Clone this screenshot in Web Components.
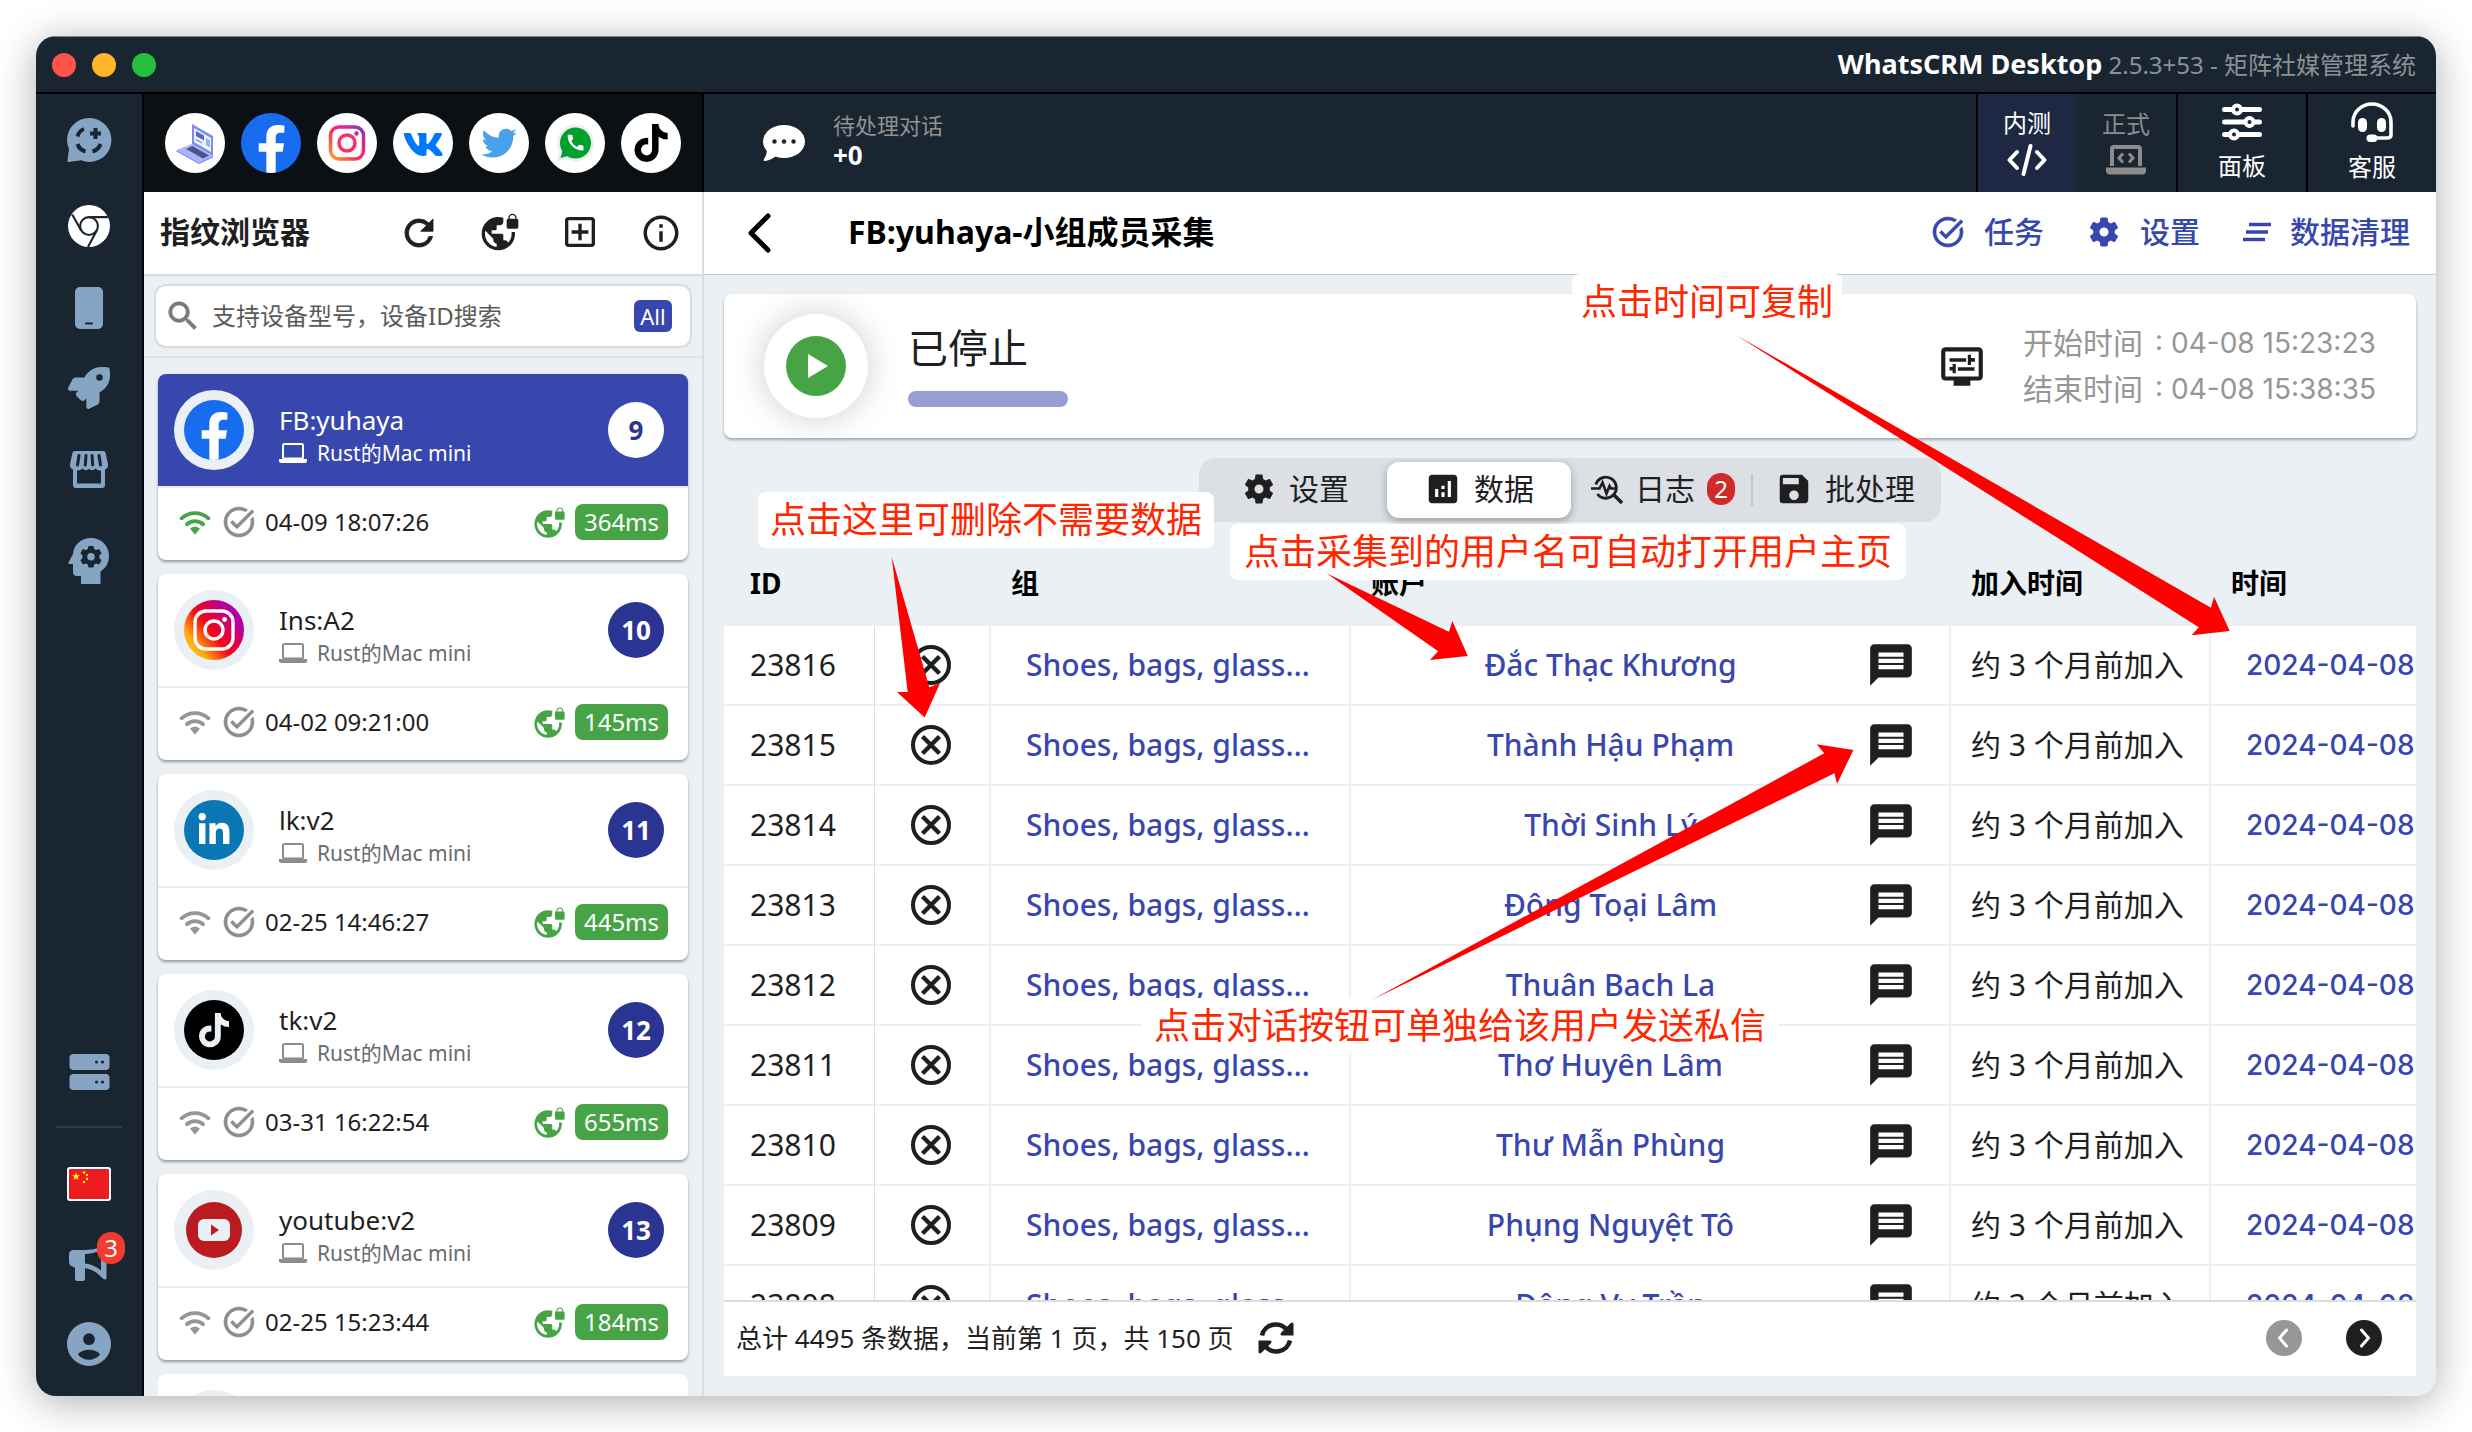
<!DOCTYPE html>
<html lang="zh-CN">
<head>
<meta charset="utf-8">
<title>WhatsCRM Desktop</title>
<style>
html,body{height:100%}
body{margin:0;background:#fff;color:#1f1f1f;font-family:"Noto Sans","Noto Sans CJK SC",sans-serif;
--ink:#1a2532;--muted:#86a5c3;--brand:#3747ad;--navy:#2a3593;--green:#46a446;--pane:#ebf0f5;--line:#dcdcdc;overflow:hidden}
</style>
</head>
<body>
<app-window></app-window>
<note-layer></note-layer>

<script>
const ICONS = {
  refresh:['0 0 24 24','<path d="M17.65 6.35A7.958 7.958 0 0 0 12 4c-4.42 0-7.99 3.58-7.99 8s3.57 8 7.99 8c3.73 0 6.84-2.55 7.73-6h-2.08A5.99 5.99 0 0 1 12 18c-3.31 0-6-2.69-6-6s2.69-6 6-6c1.66 0 3.14.69 4.22 1.78L13 11h7V4l-2.35 2.35z" stroke="currentColor" stroke-width=".5"/>'],
  vpn:['0 0 24 24','<path d="M22 4v-.5C22 2.12 20.88 1 19.5 1S17 2.12 17 3.5V4c-.55 0-1 .45-1 1v4c0 .55.45 1 1 1h5c.55 0 1-.45 1-1V5c0-.55-.45-1-1-1zm-.8 0h-3.4v-.5c0-.94.76-1.7 1.7-1.7s1.7.76 1.7 1.7V4zm-2.28 8c.04.33.08.66.08 1 0 2.08-.8 3.97-2.1 5.39-.26-.81-1-1.39-1.9-1.39h-1v-3c0-.55-.45-1-1-1H7v-2h2c.55 0 1-.45 1-1V8h2c1.1 0 2-.9 2-2V3.46c-.95-.3-1.95-.46-3-.46C5.48 3 1 7.48 1 13s4.48 10 10 10 10-4.48 10-10c0-.34-.02-.67-.05-1h-2.03zM10 20.93c-3.95-.49-7-3.85-7-7.93 0-.62.08-1.21.21-1.79L8 16v1c0 1.1.9 2 2 2v1.93z"/>'],
  add:['0 0 24 24','<path d="M19 3H5c-1.11 0-2 .9-2 2v14c0 1.1.89 2 2 2h14c1.1 0 2-.9 2-2V5c0-1.1-.9-2-2-2zm0 16H5V5h14v14zm-8-2h2v-4h4v-2h-4V7h-2v4H7v2h4z"/>'],
  info:['0 0 24 24','<path d="M11 7h2v2h-2zm0 4h2v6h-2zm1-9C6.48 2 2 6.48 2 12s4.48 10 10 10 10-4.48 10-10S17.52 2 12 2zm0 18c-4.41 0-8-3.59-8-8s3.59-8 8-8 8 3.59 8 8-3.59 8-8 8z"/>'],
  search:['0 0 24 24','<path d="M15.5 14h-.79l-.28-.27A6.471 6.471 0 0 0 16 9.5 6.5 6.5 0 1 0 9.5 16c1.61 0 3.09-.59 4.23-1.57l.27.28v.79l5 4.99L20.49 19l-4.99-5zm-6 0C7.01 14 5 11.99 5 9.5S7.01 5 9.5 5 14 7.01 14 9.5 11.99 14 9.5 14z" stroke="currentColor" stroke-width=".5"/>'],
  message:['0 0 24 24','<path d="M20 2H4c-1.1 0-1.99.9-1.99 2L2 22l4-4h14c1.1 0 2-.9 2-2V4c0-1.1-.9-2-2-2zm-2 12H6v-2h12v2zm0-3H6V9h12v2zm0-3H6V6h12v2z"/>'],
  gear:['0 0 24 24','<path fill-rule="evenodd" d="M19.14 12.94c.04-.3.06-.61.06-.94 0-.32-.02-.64-.07-.94l2.03-1.58c.18-.14.23-.41.12-.61l-1.92-3.32c-.12-.22-.37-.29-.59-.22l-2.39.96c-.5-.38-1.03-.7-1.62-.94l-.36-2.54c-.04-.24-.24-.41-.48-.41h-3.84c-.24 0-.43.17-.47.41l-.36 2.54c-.59.24-1.13.57-1.62.94l-2.39-.96c-.22-.08-.47 0-.59.22L2.74 8.87c-.12.21-.08.47.12.61l2.03 1.58c-.05.3-.09.63-.09.94s.02.64.07.94l-2.03 1.58c-.18.14-.23.41-.12.61l1.92 3.32c.12.22.37.29.59.22l2.39-.96c.5.38 1.03.7 1.62.94l.36 2.54c.05.24.24.41.48.41h3.84c.24 0 .44-.17.47-.41l.36-2.54c.59-.24 1.13-.56 1.62-.94l2.39.96c.22.08.47 0 .59-.22l1.92-3.32c.12-.22.07-.47-.12-.61l-2.01-1.58zM12 15a3 3 0 1 1 0-6 3 3 0 0 1 0 6z"/>'],
  save:['0 0 24 24','<path d="M17 3H5a2 2 0 0 0-2 2v14a2 2 0 0 0 2 2h14c1.1 0 2-.9 2-2V7l-4-4zm-5 16c-1.66 0-3-1.34-3-3s1.34-3 3-3 3 1.34 3 3-1.34 3-3 3zm3-10H5V5h10v4z"/>'],
  chart:['0 0 24 24','<path d="M19 3H5c-1.1 0-2 .9-2 2v14c0 1.1.9 2 2 2h14c1.1 0 2-.9 2-2V5c0-1.1-.9-2-2-2zM9 17H7v-5h2v5zm4 0h-2v-3h2v3zm0-5h-2v-2h2v2zm4 5h-2V7h2v10z"/>'],
  task:['0 0 24 24','<path d="M22 5.18 10.59 16.6l-4.24-4.24 1.41-1.41 2.83 2.83 10-10L22 5.18zm-2.21 5.04c.13.57.21 1.17.21 1.78 0 4.42-3.58 8-8 8s-8-3.58-8-8 3.58-8 8-8c1.58 0 3.04.46 4.28 1.25l1.44-1.44A9.9 9.9 0 0 0 12 2C6.48 2 2 6.48 2 12s4.48 10 10 10 10-4.48 10-10c0-1.19-.22-2.33-.6-3.39l-1.61 1.61z" stroke="currentColor" stroke-width=".4"/>'],
  wifi:['0 0 24 24','<g fill="none" stroke="currentColor" stroke-width="2.7" stroke-linecap="round"><path d="M2.5 9.4a14 14 0 0 1 19 0"/><path d="M6.3 13.6a8.4 8.4 0 0 1 11.4 0"/></g><path d="M9.2 16.8a4.4 4.4 0 0 1 5.6 0L12 20.2z" stroke="currentColor" stroke-linejoin="round"/>'],
  laptop:['0 0 28 22','<rect x="4" y="2" width="20" height="14.5" rx="1.5" fill="none" stroke="currentColor" stroke-width="2"/><path d="M0 17h28v2q0 2-2 2H2q-2 0-2-2z"/>'],
  account:['0 0 24 24','<path fill-rule="evenodd" d="M12 0a12 12 0 1 0 0 24 12 12 0 0 0 0-24zm0 6.2a3.2 3.2 0 1 1 0 6.4 3.2 3.2 0 0 1 0-6.4zM5.9 17.6C8.6 14.3 15.4 14.3 18.1 17.6 15.4 21.6 8.6 21.6 5.9 17.6z"/>'],
  head:['0 0 42 46','<path fill-rule="evenodd" d="M23 0C33.500 0 41 8 41 18q0 10-8.500 15.500V46H13v-8H9q-4 0-4-4v-8H1.500Q-.3 26 .6 24.300L5 16C5.500 7 13 0 23 0z"/><g transform="translate(11.200 7) scale(.98)"><path fill="#1a2532" fill-rule="evenodd" d="M9.500 1h5l.8 3 2 1.100 3-.9 2.500 4.300-2.200 2.200v2.600l2.200 2.200-2.500 4.300-3-.9-2 1.100-.8 3h-5l-.8-3-2-1.100-3 .9L1.200 15.500l2.200-2.200v-2.600L1.200 8.500l2.500-4.300 3 .9 2-1.100zM12 8.200a3.800 3.800 0 1 0 0 7.600 3.800 3.800 0 0 0 0-7.600z"/></g>'],
  display:['0 0 24 24','<path d="M20 3H4c-1.1 0-2 .9-2 2v12c0 1.1.9 2 2 2h4v2.500h8V19h4c1.100 0 2-.9 2-2V5c0-1.100-.9-2-2-2zm0 14H4V5h16v12z"/><path d="M6 8.250h8v1.700H6zM16.300 10h1.900V8.200h-1.900V6.600h-1.500v4.900h1.500zM10 12.600h8v1.700h-8zM7.500 15.500H9v-4.500H7.500v1.500H6v1.700h1.500z"/>'],
  chatplus:['0 0 44 44','<path d="M22 0a22 22 0 1 1-8 42.300L1.500 44Q.2 44 .5 42.500L2 31A22 22 0 0 1 22 0z"/><g stroke="#1a2532" fill="none" stroke-linecap="butt" stroke-width="4"><path d="M10.500 18.500Q12 13 17 11M10.500 26q2 6 8 7.500M25.500 33.500q6-1.500 8-7.500"/><path d="M28.500 10v11M23 15.500h11"/></g>'],
  chrome:['0 0 40 40','<circle cx="20" cy="20" r="20"/><g fill="none" stroke="#1a2532" stroke-width="2"><circle cx="20" cy="20" r="8.500"/><path d="M20 11.500h18M12.600 24.200 4 9M27.400 24.200 19 40"/></g>'],
  phone:['0 0 28 42','<rect width="28" height="42" rx="5"/><path d="M11 36.500h6" stroke="#1a2532" stroke-width="2" stroke-linecap="round"/>'],
  rocket:['0 0 512 512','<path d="M505.120 19.094c-1.189-5.531-6.658-11-12.207-12.188C460.716 0 435.507 0 410.407 0 307.175 0 245.269 55.203 199.052 128H94.838c-16.348.016-35.557 11.875-42.887 26.484L2.516 253.297A28.400 28.400 0 0 0 0 264a24 24 0 0 0 24.006 24h103.810l-22.475 22.469c-11.365 11.361-12.996 32.258 0 45.250L156.246 406.625c11.156 11.188 32.156 13.156 45.277 0l22.475-22.469V488a24 24 0 0 0 24.006 24 28.559 28.559 0 0 0 10.707-2.516l98.728-49.391c14.629-7.297 26.508-26.500 26.508-42.859V312.797c72.598-46.313 128.035-108.406 128.035-211.094.094-25.203.094-50.412-6.862-82.609zM384.040 168A40 40 0 1 1 424.050 128 40.023 40.023 0 0 1 384.040 168z"/>'],
  store:['0 0 40 38','<path d="M3.500 1.500Q4 0 6 0h28q2 0 2.500 1.500L39 13q.6 4-3 5.500V34q0 3-3 3H7q-3 0-3-3V18.500Q.4 17 1 13zM8 19.500V32.500h24v-13q-3 .5-5.500-2-3 3-6.500.5-3.500 2.500-6.500-.5-2.500 2.500-5.500 2z" fill-rule="evenodd"/><path d="M10 4.500 8.500 14M17 4.500 16.300 14M23 4.500l.7 9.500M30 4.500 31.500 14" stroke="#1a2532" stroke-width="3" stroke-linecap="round"/>'],
  server:['0 0 40 36','<rect width="40" height="16" rx="4"/><rect y="20" width="40" height="16" rx="4"/><g fill="#1a2532"><circle cx="27" cy="8" r="1.600"/><circle cx="33" cy="8" r="1.600"/><circle cx="27" cy="28" r="1.600"/><circle cx="33" cy="28" r="1.600"/></g>'],
  flag:['0 0 44 34','<rect width="44" height="34" rx="3" fill="#fff"/><rect x="2" y="2" width="40" height="30" rx="1" fill="#ee1c21"/><g fill="#ff0"><path d="M9 5.500l1 2.800h3l-2.400 1.800.9 2.900L9 11.300 6.500 13l.9-2.900L5 8.300h3z"/><circle cx="17" cy="5.500" r="1.200"/><circle cx="20" cy="8" r="1.200"/><circle cx="20" cy="12" r="1.200"/><circle cx="17" cy="15" r="1.200"/></g>'],
  horn:['0 0 40 36','<path fill-rule="evenodd" d="M36 0q1.500 0 1.500 2v30q0 1.500-1.500 1.500-1 0-2-1-8-9-18-10.500v11q0 2-2 2H8q-2 0-2-2V21.500Q0 20 0 16V9q0-5 5-5h10q10 0 18-3.500zM16 8v9.500q9 1 16 7V4q-8 4-16 4z"/>'],
  dots:['0 0 42 36','<ellipse cx="21" cy="16.500" rx="21" ry="16.500"/><path d="M3.500 22q1.500 6-2.500 12-1 2 .8 2Q7.500 35.500 13 31z"/><g fill="#1a2532"><circle cx="11.500" cy="16.500" r="2.200"/><circle cx="21" cy="16.500" r="2.200"/><circle cx="30.500" cy="16.500" r="2.200"/></g>'],
  code:['0 0 40 32','<g fill="none" stroke="currentColor" stroke-width="4" stroke-linecap="round" stroke-linejoin="round"><path d="M10 8 2.500 16 10 24M30 8l7.500 8-7.500 8M23.500 2l-7 28"/></g>'],
  codelap:['0 0 40 30','<path fill="none" stroke="currentColor" stroke-width="4" d="M6 21V4q0-2 2-2h24q2 0 2 2v17"/><path d="M0 22.500h40v3q0 4-4 4H4q-4 0-4-4z"/><path d="M17 8.500 13 13l4 4.500M23 8.500l4 4.500-4 4.500" fill="none" stroke="currentColor" stroke-width="3"/>'],
  sliders:['0 0 40 38','<g stroke="currentColor" stroke-width="5" stroke-linecap="round"><path d="M2.500 6.500h35M2.500 19h35M2.500 31.500h35"/></g><g fill="#1a2532" stroke="currentColor" stroke-width="4"><circle cx="15" cy="6.500" r="4"/><circle cx="27.500" cy="19" r="4"/><circle cx="12" cy="31.500" r="4"/></g>'],
  headset:['0 0 42 40','<path fill="none" stroke="currentColor" stroke-width="3.600" stroke-linecap="round" d="M2 24v-4a19 18 0 0 1 38 0v13q0 3-4 3H22"/><rect x="7" y="16" width="9" height="14" rx="4.500"/><rect x="26" y="16" width="9" height="14" rx="4.500"/><rect x="15.500" y="32.500" width="11" height="7.500" rx="3.700"/>'],
  back:['0 0 24 40','<path d="M21 3 4 20l17 17" fill="none" stroke="currentColor" stroke-width="5" stroke-linecap="round" stroke-linejoin="round"/>'],
  lines:['0 0 28 20','<path d="M6 2.500h22M3 10h22M0 17.500h22" stroke="currentColor" stroke-width="3.600"/>'],
  play:['0 0 20 24','<path d="M0 0v24l20-12z"/>'],
  log:['0 0 32 30','<g fill="none" stroke="currentColor" stroke-width="2.900"><path d="M4.800 10.500a10.500 10.500 0 1 1 1.600 9.500"/><path d="M22.500 20.500 31 29" stroke-width="3.600"/><path d="M0 14.500h8.500l3-6 4 11 3-7.500 1.500 2.500h4" stroke-width="2.600"/></g>'],
  remove:['0 0 40 40','<g fill="none" stroke="currentColor"><circle cx="20" cy="20" r="18" stroke-width="4"/><path d="m11.500 11.500 17 17m0-17-17 17" stroke-width="4.400"/></g>'],
  sync:['0 0 36 34','<g fill="none" stroke="currentColor" stroke-width="4.600"><path d="M4 14.500A14 14 0 0 1 29.500 10"/><path d="M32 19.500A14 14 0 0 1 6.500 24"/></g><path d="M34 1.500q1.500 0 1.500 1.500v11.500H24q-1.500 0-1.500-1.500 0-1 .8-1.600L32.500 2.200zM2 32.500Q.5 32.500.5 31V19.500H12q1.500 0 1.500 1.500 0 1-.8 1.600L3.500 31.800z"/>'],
  prev:['0 0 36 36','<circle cx="18" cy="18" r="18"/><path d="m20.500 10-7 8 7 8" fill="none" stroke="#fff" stroke-width="3" stroke-linecap="round"/>'],
  next:['0 0 36 36','<circle cx="18" cy="18" r="18"/><path d="m15.500 10 7 8-7 8" fill="none" stroke="#fff" stroke-width="3" stroke-linecap="round"/>']
};
const TIKTOK = 'M448 209.910a210.060 210.060 0 0 1-122.770-39.250V349.380A162.550 162.550 0 1 1 185 188.310V278.200a74.620 74.620 0 1 0 52.230 71.180V0l88 0a121.180 121.180 0 0 0 1.860 22.170A122.180 122.180 0 0 0 381 102.390a121.430 121.430 0 0 0 67 20.140z';
const FB = '<circle cx="30" cy="30" r="30" fill="#186cf0"/><path transform="scale(2.500)" fill="#fff" d="M16.671 15.543l.532-3.470h-3.328v-2.250c0-.949.465-1.874 1.956-1.874h1.514V4.996s-1.374-.235-2.686-.235c-2.741 0-4.533 1.662-4.533 4.669v2.643H7.078v3.470h3.047v8.300q1.875.3 3.750 0v-8.300z"/>';
const BRANDS = {
  laptop:'<circle cx="30" cy="30" r="30" fill="#fff"/><path d="M27 11 48 23v20L27 31z" fill="#7d8cf0"/><path d="M29 15l17 10v14L29 29z" fill="#eef2ff"/><path d="M31 18l8 4.500v5L31 23zM31 26l6 3.500v1L31 27z" fill="#5365d8"/><path d="M41 25l4 2.300v7L41 32z" fill="#8fb5f5"/><path d="M27 31 48 43 34 49.500 11.500 37z" fill="#a9b4ff"/><path d="M27.500 33 44 42.500l-6 3L21 36z" fill="#4c5485"/><path d="M11.500 37 34 49.500 48 43v1.500L34 51 11.500 38.500z" fill="#7d8cf0"/>',
  facebook:FB,
  instagram:'<defs><linearGradient id="g" x1="0" y1="1" x2="1" y2="0"><stop offset="0" stop-color="#ffa52c"/><stop offset=".35" stop-color="#ff3a55"/><stop offset=".65" stop-color="#f5208c"/><stop offset="1" stop-color="#7d3cb8"/></linearGradient></defs><circle cx="30" cy="30" r="30" fill="#fff"/><rect x="13.500" y="14" width="33" height="32" rx="8.500" fill="none" stroke="url(#g)" stroke-width="3.500"/><circle cx="30" cy="30" r="8" fill="none" stroke="#ff2f66" stroke-width="3.500"/><circle cx="39.500" cy="20.500" r="2.200" fill="#c02aa8"/>',
  vk:'<circle cx="30" cy="30" r="30" fill="#fff"/><path transform="translate(9.500 13) scale(.072)" fill="#07f" d="M545 117.700c3.700-12.500 0-21.700-17.800-21.700h-58.900c-15 0-21.900 7.900-25.600 16.700 0 0-30 73.100-72.400 120.500-13.700 13.700-20 18.100-27.500 18.100-3.700 0-9.400-4.400-9.400-16.900V117.700c0-15-4.200-21.700-16.600-21.700h-92.600c-9.400 0-15 7-15 13.500 0 14.200 21.200 17.500 23.400 57.500v86.800c0 19-3.400 22.500-10.900 22.500-20 0-68.600-73.400-97.400-157.400-5.800-16.300-11.500-22.900-26.600-22.900H38.800c-16.800 0-20.200 7.900-20.200 16.700 0 15.600 20 93.100 93.100 195.500C160.400 378.100 229 416 291.400 416c37.500 0 42.100-8.400 42.100-22.900 0-66.800-3.400-73.100 15.400-73.100 8.700 0 23.700 4.400 58.700 38.100 40 40 46.600 57.900 69 57.900h58.900c16.800 0 25.300-8.400 20.400-25-11.200-34.900-86.900-106.700-90.300-111.500-8.700-11.200-6.200-16.200 0-26.200.1-.1 72-101.300 79.400-135.600z"/>',
  twitter:'<circle cx="30" cy="30" r="30" fill="#fff"/><path transform="translate(12.500 12.500) scale(.0690)" fill="#4ba0eb" d="M459.370 151.716c.325 4.548.325 9.097.325 13.645 0 138.720-105.583 298.558-298.558 298.558-59.452 0-114.680-17.219-161.137-47.106 8.447.974 16.568 1.299 25.340 1.299 49.055 0 94.213-16.568 130.274-44.832-46.132-.975-84.792-31.188-98.112-72.772 6.498.974 12.995 1.624 19.818 1.624 9.421 0 18.843-1.300 27.614-3.573-48.081-9.747-84.143-51.980-84.143-102.985v-1.299c13.969 7.797 30.214 12.670 47.431 13.319-28.264-18.843-46.781-51.005-46.781-87.391 0-19.492 5.197-37.360 14.294-52.954 51.655 63.675 129.300 105.258 216.365 109.807-1.624-7.797-2.599-15.918-2.599-24.040 0-57.828 46.782-104.934 104.934-104.934 30.213 0 57.502 12.670 76.670 33.137 23.715-4.548 46.456-13.320 66.599-25.340-7.798 24.366-24.366 44.833-46.132 57.827 21.117-2.273 41.584-8.122 60.426-16.243-14.292 20.791-32.161 39.308-52.628 54.253z"/>',
  whatsapp:'<circle cx="30" cy="30" r="30" fill="#fff"/><circle cx="30.500" cy="30" r="18.500" fill="#eee"/><path d="M11.500 49l3.500-12 8 9z" fill="#eee"/><circle cx="30.500" cy="30" r="15.500" fill="#00a02f"/><path d="M15.500 45l2.500-9 6.500 6.500z" fill="#00a02f"/><path transform="translate(20 19) scale(.88)" fill="#fff" d="M20.010 15.380c-1.230 0-2.420-.2-3.530-.56-.35-.12-.74-.03-1.010.24l-1.570 1.970c-2.830-1.350-5.480-3.900-6.890-6.830l1.950-1.660c.27-.28.35-.67.24-1.020-.37-1.110-.56-2.300-.56-3.530 0-.54-.45-.99-.99-.99H4.190C3.650 3 3 3.240 3 3.990 3 13.280 10.730 21 20.010 21c.71 0 .99-.63.99-1.180v-3.450c0-.54-.45-.99-.99-.99z"/>',
  tiktok:`<circle cx="30" cy="30" r="30" fill="#fff"/><path transform="translate(13.500 11) scale(.0740)" d="${TIKTOK}"/>`,
  insround:'<defs><linearGradient id="h" x1="0" y1=".9" x2="1" y2=".1"><stop offset="0" stop-color="#ffd21e"/><stop offset=".2" stop-color="#ffa812"/><stop offset=".45" stop-color="#f50a14"/><stop offset=".6" stop-color="#e00040"/><stop offset=".8" stop-color="#b400a0"/><stop offset="1" stop-color="#a800c0"/></linearGradient></defs><circle cx="30" cy="30" r="30" fill="url(#h)"/><rect x="11" y="11" width="38" height="38" rx="11" fill="none" stroke="#fff" stroke-width="3.400"/><circle cx="30" cy="30" r="9" fill="none" stroke="#fff" stroke-width="3.400"/><circle cx="40.500" cy="19.500" r="2.400" fill="#fff"/>',
  linkedin:'<circle cx="30" cy="30" r="30" fill="#0a76b4"/><path transform="translate(14.500 13) scale(.0690)" fill="#fff" d="M100.280 448H7.400V148.900h92.880zM53.790 108.100C24.090 108.100 0 83.500 0 53.800a53.790 53.790 0 0 1 107.580 0c0 29.700-24.100 54.300-53.790 54.300zM447.900 448h-92.680V302.400c0-34.700-.7-79.200-48.290-79.200-48.290 0-55.690 37.700-55.690 76.700V448h-92.780V148.900h89.080v40.800h1.300c12.400-23.500 42.690-48.300 87.880-48.300 94 0 111.280 61.900 111.280 142.300V448z"/>',
  tkround:`<circle cx="30" cy="30" r="30" fill="#000"/><path transform="translate(15 13) scale(.0670)" fill="#ebf0f5" d="${TIKTOK}"/>`,
  youtube:'<circle cx="30" cy="30" r="28" fill="#b91b20"/><rect x="14" y="19" width="32" height="22" rx="6" fill="#ebf0f5"/><path d="M27 24.500v11l8-5.500z" fill="#b91b20"/>'
};

class UiIcon extends HTMLElement {
  connectedCallback(){
    const [box,art] = ICONS[this.getAttribute('name')];
    this.attachShadow({mode:'open'}).innerHTML =
      `<style>:host{display:inline-flex;flex:none;width:var(--w,36px);height:var(--h,var(--w,36px))}svg{width:100%;height:100%;display:block;overflow:visible}</style><svg viewBox="${box}" fill="currentColor" aria-hidden="true">${art}</svg>`;
  }
}
customElements.define('ui-icon',UiIcon);

class BrandLogo extends HTMLElement {
  connectedCallback(){
    this.attachShadow({mode:'open'}).innerHTML =
      `<style>:host{display:block;flex:none;width:60px;height:60px}svg{display:block;width:100%;height:100%}</style><svg viewBox="0 0 60 60" aria-hidden="true">${BRANDS[this.getAttribute('name')]}</svg>`;
  }
}
customElements.define('brand-logo',BrandLogo);

const ic = (name,w,h=w) => `<ui-icon name="${name}" style="--w:${w}px;--h:${h}px"></ui-icon>`;
const RESET = `*{box-sizing:border-box}button{all:unset;box-sizing:border-box;cursor:pointer}a{color:inherit;text-decoration:none}`;

customElements.define('title-bar',class extends HTMLElement{
  connectedCallback(){
    this.attachShadow({mode:'open'}).innerHTML=`<style>${RESET}
    :host{display:flex;align-items:center;justify-content:space-between;height:58px;padding:0 20px 0 16px;background:var(--ink);border-top:1px solid #7d8792;border-bottom:2px solid #000;box-sizing:border-box;flex:none}
    .lights{display:flex;gap:16px}.lights button{width:24px;height:24px;border-radius:50%}
    h1{margin:0;font-size:24px;line-height:36px;font-weight:400;color:#8c9196}
    b{font-size:27px;font-weight:700;color:#fff}</style>
    <div class="lights"><button aria-label="关闭" style="background:#ff5249"></button><button aria-label="最小化" style="background:#ffb429"></button><button aria-label="最大化" style="background:#24c138"></button></div>
    <h1><b>WhatsCRM Desktop</b> 2.5.3+53 - 矩阵社媒管理系统</h1>`;
  }
});

customElements.define('nav-rail',class extends HTMLElement{
  connectedCallback(){
    this.attachShadow({mode:'open'}).innerHTML=`<style>${RESET}
    :host{display:flex;flex-direction:column;justify-content:space-between;width:108px;box-sizing:border-box;background:var(--ink);border-right:2px solid #000;color:var(--muted);padding:2px 0 12px;flex:none}
    nav,div.low{display:flex;flex-direction:column;align-items:center}
    button{height:80px;width:100%;display:flex;align-items:center;justify-content:center}
    .on{color:#fff}.first{height:88px}.tall{height:84px}.last{height:98px}
    hr{width:66px;height:2px;border:0;margin:14px 0 16px;background:#2b3d59}
    .badge{position:relative}.badge span{position:absolute;top:8px;right:17px;min-width:28px;height:32px;border-radius:16px;background:#f23b30;color:#fff;font-size:24px;line-height:32px;text-align:center}
    </style>
    <nav><button class="first" aria-label="对话">${ic('chatplus',44)}</button><button class="on tall" aria-label="浏览器">${ic('chrome',42)}</button><button aria-label="手机">${ic('phone',28,42)}</button><button aria-label="任务">${ic('rocket',42)}</button><button class="tall" aria-label="商店">${ic('store',40,38)}</button><button class="last" aria-label="智能">${ic('head',42,46)}</button></nav>
    <div class="low"><button aria-label="服务器">${ic('server',41,36)}</button><hr><button aria-label="语言">${ic('flag',44,34)}</button><button class="badge" aria-label="公告">${ic('horn',40,36)}<span>3</span></button><button aria-label="账户">${ic('account',44)}</button></div>`;
  }
});

customElements.define('social-bar',class extends HTMLElement{
  connectedCallback(){
    this.attachShadow({mode:'open'}).innerHTML=`<style>${RESET}:host{display:flex;align-items:center;gap:16px;height:98px;padding:0 21px;box-sizing:border-box;background:#0b1015;flex:none}</style>`+
    ['laptop','facebook','instagram','vk','twitter','whatsapp','tiktok'].map(n=>`<button aria-label="${n}"><brand-logo name="${n}"></brand-logo></button>`).join('');
  }
});

customElements.define('device-card',class extends HTMLElement{
  connectedCallback(){
    const a=n=>this.getAttribute(n);
    this.attachShadow({mode:'open'}).innerHTML=`<style>${RESET}
    :host{display:block;height:186px;background:#fff;border-radius:8px;overflow:hidden;box-shadow:0 2px 3px rgba(0,0,0,.35);flex:none}
    .top{display:flex;align-items:center;height:114px;padding:0 24px 0 16px;border-bottom:2px solid #eee}
    .avatar{width:80px;height:80px;border-radius:50%;background:var(--pane);display:grid;place-items:center}
    .who{flex:1;padding:12px 0 0 25px;display:flex;flex-direction:column}
    .name{font-size:26px;line-height:34px}
    .host{display:flex;align-items:center;gap:10px;font-size:21px;line-height:32px;color:#6b6b6b}
    .host ui-icon{color:#8c8c8c}
    .num{width:56px;height:56px;border-radius:50%;background:var(--navy);color:#fff;font-size:26px;font-weight:700;line-height:56px;text-align:center}
    .bot{display:flex;align-items:center;height:68px;padding:0 20px 0 20px;font-size:24px;line-height:36px}
    .bot .t{flex:1;padding-left:8px}
    .wifi{color:#969696;display:flex}.chk{color:#8c8c8c;display:flex;margin-left:9px}.vpn{color:var(--green);display:flex;margin-right:9px}
    .ms{background:var(--green);color:#fff;border-radius:8px;width:93px;text-align:center}
    :host([selected]) .top{background:var(--brand)}
    :host([selected]) .top .who,:host([selected]) .host,:host([selected]) .host ui-icon{color:#fff}
    :host([selected]) .num{background:#fff;color:var(--navy)}
    :host([selected]) .wifi{color:var(--green)}</style>
    <div class="top"><div class="avatar"><brand-logo name="${a('brand')}"></brand-logo></div><div class="who"><span class="name">${a('name')}</span><span class="host">${ic('laptop',28,22)}Rust的Mac mini</span></div><span class="num">${a('num')}</span></div>
    <div class="bot"><span class="wifi">${ic('wifi',34)}</span><span class="chk">${ic('task',36)}</span><time class="t">${a('time')}</time><span class="vpn">${ic('vpn',33)}</span><span class="ms">${a('ms')}</span></div>`;
  }
});

customElements.define('device-panel',class extends HTMLElement{
  connectedCallback(){
    const D=[['facebook','FB:yuhaya',9,'04-09 18:07:26','364ms'],['insround','Ins:A2',10,'04-02 09:21:00','145ms'],['linkedin','lk:v2',11,'02-25 14:46:27','445ms'],['tkround','tk:v2',12,'03-31 16:22:54','655ms'],['youtube','youtube:v2',13,'02-25 15:23:44','184ms']];
    this.attachShadow({mode:'open'}).innerHTML=`<style>${RESET}
    :host{display:flex;flex-direction:column;width:560px;flex:none;box-sizing:border-box;border-right:2px solid var(--line);background:var(--pane);overflow:hidden}
    header{display:flex;align-items:center;height:84px;background:#fff;border-bottom:2px solid var(--line);padding:0 20px 0 16px;flex:none}
    h2{flex:1;margin:0;padding-bottom:2px;font-size:30px;line-height:40px;font-weight:700}
    .tools{display:flex;gap:40px}.tools button{display:flex}
    .find{padding:8px 10px;height:82px;border-bottom:2px solid #dfe3e6;flex:none}
    label{display:flex;align-items:center;height:64px;background:#fff;border:2px solid var(--line);border-radius:12px;padding:0 18px 0 8px;color:#7a7a7a;gap:10px}
    input{flex:1;min-width:0;border:0;outline:0;background:none;font:24px/36px "Noto Sans","Noto Sans CJK SC",sans-serif;color:#555;padding:0}
    input::placeholder{color:#5a5a5a;opacity:1}
    .all{background:var(--brand);color:#fff;border-radius:6px;width:38px;text-align:center;font-size:22px;line-height:32px}
    .list{display:flex;flex-direction:column;gap:14px;padding:16px 14px;min-height:0;flex:1;overflow:hidden}
    .peek{flex:none;height:186px;background:#fff;border-radius:8px;padding:16px}
    .peek i{display:block;width:80px;height:80px;border-radius:50%;background:var(--pane)}</style>
    <header><h2>指纹浏览器</h2><div class="tools"><button aria-label="刷新">${ic('refresh',42)}</button><button aria-label="代理">${ic('vpn',40)}</button><button aria-label="新增">${ic('add',40)}</button><button aria-label="信息">${ic('info',42)}</button></div></header>
    <div class="find"><label>${ic('search',38)}<input placeholder="支持设备型号，设备ID搜索" aria-label="搜索"><button class="all">All</button></label></div>
    <div class="list">${D.map((d,i)=>`<device-card ${i?'':'selected'} brand="${d[0]}" name="${d[1]}" num="${d[2]}" time="${d[3]}" ms="${d[4]}"></device-card>`).join('')}<div class="peek"><i></i></div></div>`;
  }
});

customElements.define('top-bar',class extends HTMLElement{
  connectedCallback(){
    this.attachShadow({mode:'open'}).innerHTML=`<style>${RESET}
    :host{display:flex;align-items:stretch;height:98px;background:var(--ink);border-left:2px solid #000;box-sizing:border-box;color:#fff;flex:1;min-width:0}
    .chat{display:flex;align-items:center;gap:28px;padding-left:59px;flex:1}
    .chat div{display:flex;flex-direction:column;padding-bottom:6px}.chat span{font-size:22px;line-height:30px;color:#919191}.chat b{font-size:26px;line-height:30px}
    button{display:flex;flex-direction:column;align-items:center;justify-content:center;gap:8px;width:130px;border-left:2px solid #000;font-size:24px;line-height:34px}
    .seg{width:100px;gap:4px;padding-bottom:4px}.seg.on{background:#1f2842}.seg.off{border-left:0;color:#8c8c8c}</style>
    <div class="chat">${ic('dots',42,36)}<div><span>待处理对话</span><b>+0</b></div></div>
    <button class="seg on">内测${ic('code',40,32)}</button><button class="seg off">正式${ic('codelap',40,30)}</button>
    <button>${ic('sliders',40,38)}面板</button><button>${ic('headset',42,40)}客服</button>`;
  }
});

customElements.define('page-head',class extends HTMLElement{
  connectedCallback(){
    this.attachShadow({mode:'open'}).innerHTML=`<style>${RESET}
    :host{display:flex;align-items:center;height:83px;background:#fff;border-bottom:1px solid #c5cbd0;box-sizing:border-box;padding:0 26px 0 43px;flex:none}
    .back{display:flex;color:#000}
    h2{flex:1;margin:0;padding:0 0 2px 77px;font-size:32px;line-height:44px;font-weight:700;color:#000}
    nav{display:flex;gap:42px;padding-bottom:2px;color:var(--brand);font-size:30px;line-height:40px;font-weight:500}
    a{display:flex;align-items:center;gap:18px}</style>
    <button class="back" aria-label="返回">${ic('back',24,40)}</button><h2>FB:yuhaya-小组成员采集</h2>
    <nav><a href="#">${ic('task',36)}任务</a><a href="#">${ic('gear',36)}设置</a><a href="#">${ic('lines',30,20)}数据清理</a></nav>`;
  }
});

customElements.define('status-card',class extends HTMLElement{
  connectedCallback(){
    this.attachShadow({mode:'open'}).innerHTML=`<style>${RESET}
    :host{display:flex;align-items:center;height:144px;background:#fff;border-radius:8px;box-shadow:0 2px 3px rgba(0,0,0,.3);padding:0 40px;flex:none;box-sizing:border-box}
    .ring{width:104px;height:104px;border-radius:50%;background:#fff;box-shadow:0 0 34px rgba(0,0,0,.2);display:grid;place-items:center}
    .ring span{width:60px;height:60px;border-radius:50%;background:var(--green);color:#fff;display:grid;place-items:center;padding-left:4px}
    .state{flex:1;padding:0 0 2px 40px}.state p{margin:0 0 18px;font-size:40px;line-height:50px}
    .bar{width:160px;height:16px;border-radius:8px;background:#979dd5}
    .times{padding-left:36px;font-size:30px;line-height:46px;color:#969696}
    .times div{display:flex;gap:12px}.times time{font:28px/46px Inter,sans-serif}</style>
    <button class="ring" aria-label="开始"><span>${ic('play',20,24)}</span></button>
    <div class="state"><p>已停止</p><div class="bar"></div></div>
    ${ic('display',50)}
    <div class="times"><div>开始时间 <time>: 04-08 15:23:23</time></div><div>结束时间 <time>: 04-08 15:38:35</time></div></div>`;
  }
});

customElements.define('tab-strip',class extends HTMLElement{
  connectedCallback(){
    this.attachShadow({mode:'open'}).innerHTML=`<style>${RESET}
    :host{display:flex;align-items:center;align-self:center;height:64px;background:#dcdfe4;border-radius:16px;padding:0 4px;flex:none;box-sizing:border-box}
    button{display:flex;align-items:center;justify-content:center;gap:12px;height:56px;padding-bottom:2px;font-size:30px;line-height:40px;width:184px}
    .on{background:#fff;border-radius:12px;box-shadow:0 3px 8px rgba(0,0,0,.3)}
    .badge{min-width:28px;height:32px;border-radius:16px;background:#d12a2a;color:#fff;font-size:24px;line-height:32px;text-align:center}
    .log{gap:12px;width:180px;padding-left:4px}
    i{width:2px;height:32px;background:#c4c6c9}</style>
    <button>${ic('gear',36)}设置</button><button class="on">${ic('chart',38)}数据</button><button class="log">${ic('log',32,30)}日志<span class="badge">2</span></button><i></i><button>${ic('save',38)}批处理</button>`;
  }
});

customElements.define('member-table',class extends HTMLElement{
  connectedCallback(){
    const N=['Đắc Thạc Khương','Thành Hậu Phạm','Thời Sinh Lý','Đông Toại Lâm','Thuân Bạch La','Thơ Huyên Lâm','Thư Mẫn Phùng','Phụng Nguyệt Tô','Đông Vy Trần'];
    this.attachShadow({mode:'open'}).innerHTML=`<style>${RESET}
    :host{display:block;flex:1;min-height:0;overflow:hidden}
    table{width:100%;border-collapse:separate;border-spacing:0;table-layout:fixed;font-size:30px;line-height:40px}
    th{height:104px;text-align:left;font-size:28px;font-weight:700;color:#000;padding:18px 20px 0}
    th:nth-child(1){width:151px}th:nth-child(2){width:116px}th:nth-child(3){width:360px}th:nth-child(5){width:260px}th:nth-child(6){width:205px}
    td{height:80px;background:#fff;padding:0 20px;border-bottom:2px solid var(--pane);border-right:2px solid var(--pane);white-space:nowrap}
    td:first-child{border-right:1px solid #dcdcdc}td:last-child{border-right:0}
    th:first-child,td:first-child{padding-left:26px}
    td:nth-child(2){padding:0 2px 0 0}td:nth-child(2) button{display:flex;justify-content:center;width:100%}
    a{color:var(--brand);font-weight:500}
    td.g,td.d{padding-left:35px;padding-right:0}td.d{font:500 28px/40px Inter,sans-serif}
    .acc{display:flex;align-items:center}.acc a{flex:1;text-align:center}.acc button{display:flex}
    td:nth-child(4){padding:0 33px 0 4px}</style>
    <table><thead><tr><th>ID</th><th></th><th>组</th><th>账户</th><th>加入时间</th><th>时间</th></tr></thead><tbody>
    ${N.map((n,i)=>`<tr><td>${23816-i}</td><td><button aria-label="删除">${ic('remove',40)}</button></td><td class="g"><a href="#">Shoes, bags, glass…</a></td><td><div class="acc"><a href="#">${n}</a><button aria-label="私信">${ic('message',50)}</button></div></td><td>约 3 个月前加入</td><td class="d"><a href="#">2024-04-08</a></td></tr>`).join('')}
    </tbody></table>`;
  }
});

customElements.define('page-foot',class extends HTMLElement{
  connectedCallback(){
    this.attachShadow({mode:'open'}).innerHTML=`<style>${RESET}
    :host{display:flex;align-items:center;height:76px;background:#fff;border-top:2px solid var(--line);box-sizing:border-box;padding:0 34px 2px 12px;font-size:26px;line-height:36px;flex:none}
    .sync{display:flex;margin-left:24px}.pg{margin-left:auto;display:flex;gap:44px}.pg button{display:flex}.off{color:#969696}</style>
    <span>总计 4495 条数据，当前第 1 页，共 150 页</span><button class="sync" aria-label="刷新">${ic('sync',36,34)}</button>
    <div class="pg"><button class="off" aria-label="上一页">${ic('prev',36)}</button><button aria-label="下一页">${ic('next',36)}</button></div>`;
  }
});

customElements.define('app-window',class extends HTMLElement{
  connectedCallback(){
    this.attachShadow({mode:'open'}).innerHTML=`<style>
    :host{display:block;height:100vh;box-sizing:border-box;padding:36px}
    .win{height:100%;display:flex;flex-direction:column;border-radius:20px;overflow:hidden;background:var(--pane);box-shadow:0 6px 40px rgba(0,0,0,.32)}
    .body{flex:1;display:flex;min-height:0}
    .right{flex:1;display:flex;flex-direction:column;min-width:0}
    .bars{display:flex;flex:none}.bars social-bar{width:558px}
    .work{flex:1;display:flex;min-height:0}
    main{flex:1;display:flex;flex-direction:column;min-width:0}
    .content{flex:1;display:flex;flex-direction:column;min-height:0;padding:19px 20px 20px}
    tab-strip{margin-top:20px}</style>
    <div class="win"><title-bar></title-bar><div class="body"><nav-rail></nav-rail><div class="right">
      <div class="bars"><social-bar></social-bar><top-bar></top-bar></div>
      <div class="work"><device-panel></device-panel><main><page-head></page-head>
        <div class="content"><status-card></status-card><tab-strip></tab-strip><member-table></member-table><page-foot></page-foot></div></main></div>
    </div></div></div>`;
  }
});

customElements.define('callout-note',class extends HTMLElement{
  connectedCallback(){
    this.attachShadow({mode:'open'}).innerHTML=`<style>:host{position:absolute;box-sizing:border-box;height:56px;border-radius:8px;background:#fff;color:#ff2600;font-size:36px;line-height:56px;text-align:center;white-space:nowrap}</style><slot></slot>`;
  }
});

customElements.define('note-layer',class extends HTMLElement{
  connectedCallback(){
    this.attachShadow({mode:'open'}).innerHTML=`<style>:host{position:absolute;inset:0;pointer-events:none}
    svg{position:absolute;left:0;top:0;width:2472px;height:1432px}
    .a{left:758px;top:492px;width:456px}.b{left:1230px;top:524px;width:676px}.c{left:1572px;top:274px;width:270px}.d{left:1142px;top:998px;width:636px}</style>
    <callout-note class="a">点击这里可删除不需要数据</callout-note>
    <callout-note class="b">点击采集到的用户名可自动打开用户主页</callout-note>
    <callout-note class="c">点击时间可复制</callout-note>
    <callout-note class="d">点击对话按钮可单独给该用户发送私信</callout-note>
    <svg viewBox="0 0 2472 1432" fill="#f00" aria-hidden="true">
    <path d="M891.700 557 907.700 692 897 692 924.700 717.500 940 683.300 929.300 687.300z"/>
    <path d="M1326.400 573.300 1448.900 631.700 1452.400 621 1467.800 656 1430 660 1438.200 651.300z"/>
    <path d="M1736 335 2093 540 2211 607.700 2214 596.700 2229.700 631 2191.700 635.300 2198.800 627.300 2061 540z"/>
    <path d="M1371.600 1000 1824.200 753.300 1816.600 744.300 1853.400 750 1837 784 1834.500 773.300z"/></svg>`;
  }
});
</script>
</body>
</html>
